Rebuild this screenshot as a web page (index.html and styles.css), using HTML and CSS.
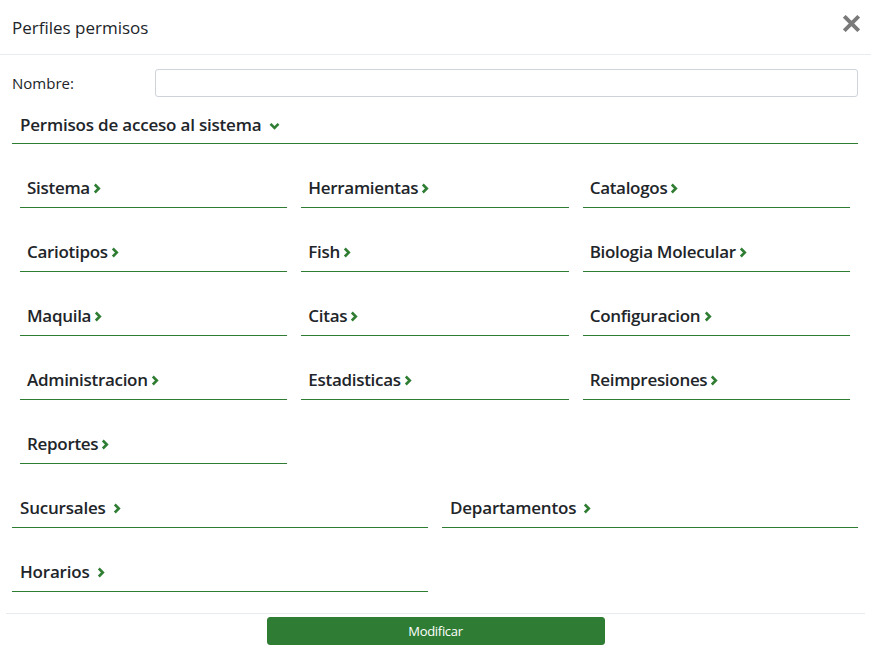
FILE: index.html
```html
<!DOCTYPE html>
<html lang="es">
<head>
<meta charset="utf-8">
<title>Perfiles permisos</title>
<link rel="stylesheet" href="styles.css">
</head>
<body>
<div class="modal">
  <div class="modal-header">
    <h5 class="modal-title">Perfiles permisos</h5>
    <button class="close" type="button" aria-label="Cerrar">
      <svg width="17" height="17" viewBox="0 0 16 16"><path d="M2.5 2.5 L13.5 13.5 M13.5 2.5 L2.5 13.5" stroke="#7a7a7a" stroke-width="3.6" stroke-linecap="square"/></svg>
    </button>
  </div>
  <div class="modal-body">
    <div class="field">
      <label class="field-label">Nombre:</label>
      <input class="field-input" type="text">
    </div>
    <div class="section-title">Permisos de acceso al sistema <svg class="chev-down" width="11" height="8" viewBox="0 0 11 8"><path d="M1.5 1.8 L5.5 5.8 L9.5 1.8" fill="none" stroke="#2e7d32" stroke-width="2.6"/></svg></div>
    <div class="grid3">
      <div class="item">Sistema <svg class="chev" width="8" height="11" viewBox="0 0 8 11"><path d="M1.8 1.5 L5.8 5.5 L1.8 9.5" fill="none" stroke="#2e7d32" stroke-width="2.6"/></svg></div>
      <div class="item">Herramientas <svg class="chev" width="8" height="11" viewBox="0 0 8 11"><path d="M1.8 1.5 L5.8 5.5 L1.8 9.5" fill="none" stroke="#2e7d32" stroke-width="2.6"/></svg></div>
      <div class="item">Catalogos <svg class="chev" width="8" height="11" viewBox="0 0 8 11"><path d="M1.8 1.5 L5.8 5.5 L1.8 9.5" fill="none" stroke="#2e7d32" stroke-width="2.6"/></svg></div>
      <div class="item">Cariotipos <svg class="chev" width="8" height="11" viewBox="0 0 8 11"><path d="M1.8 1.5 L5.8 5.5 L1.8 9.5" fill="none" stroke="#2e7d32" stroke-width="2.6"/></svg></div>
      <div class="item">Fish <svg class="chev" width="8" height="11" viewBox="0 0 8 11"><path d="M1.8 1.5 L5.8 5.5 L1.8 9.5" fill="none" stroke="#2e7d32" stroke-width="2.6"/></svg></div>
      <div class="item">Biologia Molecular <svg class="chev" width="8" height="11" viewBox="0 0 8 11"><path d="M1.8 1.5 L5.8 5.5 L1.8 9.5" fill="none" stroke="#2e7d32" stroke-width="2.6"/></svg></div>
      <div class="item">Maquila <svg class="chev" width="8" height="11" viewBox="0 0 8 11"><path d="M1.8 1.5 L5.8 5.5 L1.8 9.5" fill="none" stroke="#2e7d32" stroke-width="2.6"/></svg></div>
      <div class="item">Citas <svg class="chev" width="8" height="11" viewBox="0 0 8 11"><path d="M1.8 1.5 L5.8 5.5 L1.8 9.5" fill="none" stroke="#2e7d32" stroke-width="2.6"/></svg></div>
      <div class="item">Configuracion <svg class="chev" width="8" height="11" viewBox="0 0 8 11"><path d="M1.8 1.5 L5.8 5.5 L1.8 9.5" fill="none" stroke="#2e7d32" stroke-width="2.6"/></svg></div>
      <div class="item">Administracion <svg class="chev" width="8" height="11" viewBox="0 0 8 11"><path d="M1.8 1.5 L5.8 5.5 L1.8 9.5" fill="none" stroke="#2e7d32" stroke-width="2.6"/></svg></div>
      <div class="item">Estadisticas <svg class="chev" width="8" height="11" viewBox="0 0 8 11"><path d="M1.8 1.5 L5.8 5.5 L1.8 9.5" fill="none" stroke="#2e7d32" stroke-width="2.6"/></svg></div>
      <div class="item">Reimpresiones <svg class="chev" width="8" height="11" viewBox="0 0 8 11"><path d="M1.8 1.5 L5.8 5.5 L1.8 9.5" fill="none" stroke="#2e7d32" stroke-width="2.6"/></svg></div>
      <div class="item">Reportes <svg class="chev" width="8" height="11" viewBox="0 0 8 11"><path d="M1.8 1.5 L5.8 5.5 L1.8 9.5" fill="none" stroke="#2e7d32" stroke-width="2.6"/></svg></div>
    </div>
    <div class="grid2">
      <div class="item wide">Sucursales <svg class="chev" width="8" height="11" viewBox="0 0 8 11"><path d="M1.8 1.5 L5.8 5.5 L1.8 9.5" fill="none" stroke="#2e7d32" stroke-width="2.6"/></svg></div>
      <div class="item wide">Departamentos <svg class="chev" width="8" height="11" viewBox="0 0 8 11"><path d="M1.8 1.5 L5.8 5.5 L1.8 9.5" fill="none" stroke="#2e7d32" stroke-width="2.6"/></svg></div>
      <div class="item wide">Horarios <svg class="chev" width="8" height="11" viewBox="0 0 8 11"><path d="M1.8 1.5 L5.8 5.5 L1.8 9.5" fill="none" stroke="#2e7d32" stroke-width="2.6"/></svg></div>
    </div>
  </div>
  <div class="modal-footer">
    <button class="btn-submit" type="button">Modificar</button>
  </div>
</div>
</body>
</html>
```
FILE: styles.css
```css
html, body {
  margin: 0;
  padding: 0;
  background: #ffffff;
}
body {
  font-family: "Open Sans", "Noto Sans", "Liberation Sans", sans-serif;
  color: #212529;
}
.modal {
  width: 871px;
}
.modal-header {
  height: 55px;
  box-sizing: border-box;
  border-bottom: 1px solid #e9ecef;
  display: flex;
  align-items: center;
  justify-content: space-between;
  padding: 0 11px 0 12px;
}
.modal-title {
  margin: 0;
  font-size: 17px;
  font-weight: 500;
}
.close {
  border: 0;
  background: none;
  padding: 0;
  margin-top: -8px;
  display: flex;
  cursor: pointer;
}
.modal-body {
  padding: 14px 13px 0 12px;
}
.field {
  display: flex;
  align-items: center;
}
.field-label {
  width: 143px;
  font-size: 15px;
}
.field-input {
  flex: 1;
  height: 28px;
  box-sizing: border-box;
  border: 1px solid #ced4da;
  border-radius: 3px;
  margin: 0;
  padding: 0 8px;
}
.section-title {
  margin-top: 16px;
  padding: 0 8px 6px;
  font-size: 17px;
  font-weight: 600;
  line-height: 24px;
  border-bottom: 1px solid #2e7d32;
  letter-spacing: -0.2px;
}
.chev-down {
  margin-left: 3px;
  vertical-align: 1px;
}
.grid3 {
  display: grid;
  grid-template-columns: repeat(3, 1fr);
  column-gap: 14px;
  padding: 0 8px;
}
.item {
  margin-top: 32px;
  padding: 0 7px 7px;
  font-size: 17px;
  font-weight: 600;
  line-height: 24px;
  border-bottom: 1px solid #2e7d32;
  letter-spacing: -0.3px;
}
.chev {
  margin-left: -1px;
  vertical-align: 0px;
}
.grid2 {
  display: grid;
  grid-template-columns: repeat(2, 1fr);
  column-gap: 14px;
}
.item.wide {
  padding-left: 8px;
  letter-spacing: -0.2px;
}
.item.wide .chev {
  margin-left: 3px;
}
.modal-footer {
  margin: 21px 6px 0;
  border-top: 1px solid #e9ecef;
  padding-top: 3px;
  display: flex;
  justify-content: center;
}
.btn-submit {
  width: 338px;
  height: 28px;
  background: #2f7d34;
  border: 1px solid #2e7d32;
  border-radius: 3px;
  color: #ffffff;
  font-family: "Open Sans", "Noto Sans", sans-serif;
  font-size: 13px;
  letter-spacing: -0.3px;
  padding: 0;
}
```
